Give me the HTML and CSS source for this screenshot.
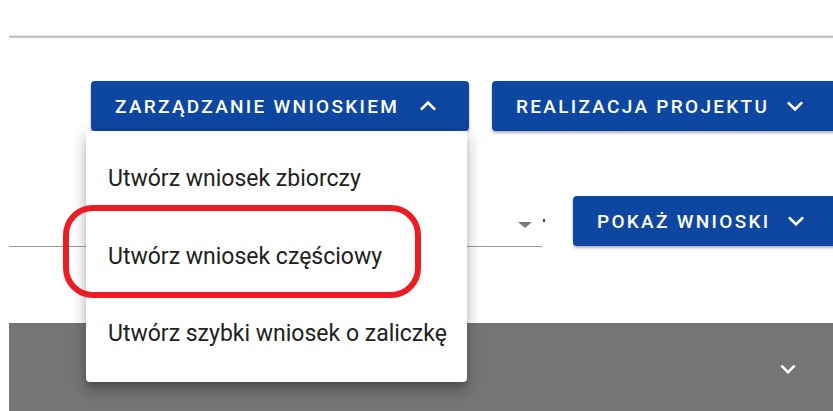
FILE: index.html
```html
<!DOCTYPE html>
<html lang="pl">
<head>
<meta charset="utf-8">
<title>Wnioski</title>
<link rel="stylesheet" href="styles.css">
</head>
<body>
<div class="page">
  <div class="rule"></div>

  <div class="actions">
    <div class="menu-wrap">
      <button class="btn btn-wide">
        <span>ZARZĄDZANIE WNIOSKIEM</span>
        <svg class="chev" viewBox="0 0 24 24"><path d="M12 8l-6 6 1.41 1.41L12 10.83l4.59 4.58L18 14z"/></svg>
      </button>
      <ul class="menu">
        <li>Utwórz wniosek zbiorczy</li>
        <li>Utwórz wniosek częściowy</li>
        <li>Utwórz szybki wniosek o zaliczkę</li>
      </ul>
      <div class="ring"></div>
    </div>
    <button class="btn btn-edge">
      <span>REALIZACJA PROJEKTU</span>
      <svg class="chev" viewBox="0 0 24 24"><path d="M16.59 8.59L12 13.17 7.41 8.59 6 10l6 6 6-6z"/></svg>
    </button>
  </div>

  <div class="filters">
    <div class="select">
      <span class="caret"></span>
      <span class="tick"></span>
    </div>
    <button class="btn btn-edge">
      <span>POKAŻ WNIOSKI</span>
      <svg class="chev" viewBox="0 0 24 24"><path d="M16.59 8.59L12 13.17 7.41 8.59 6 10l6 6 6-6z"/></svg>
    </button>
  </div>

  <div class="bar">
    <svg class="bar-chev" viewBox="0 0 24 24"><path d="M16.59 8.59L12 13.17 7.41 8.59 6 10l6 6 6-6z"/></svg>
  </div>
</div>
</body>
</html>
```

FILE: styles.css
```css
html, body {
  margin: 0;
  padding: 0;
  background: #fff;
  overflow: hidden;
}

body {
  width: 833px;
  height: 411px;
  font-family: Roboto, "Noto Sans", sans-serif;
}

.page {
  padding-left: 9px;
}

.rule {
  margin-top: 35px;
  height: 3px;
  background: #c2c2c2;
  border-top: 1px solid #e2e2e2;
  box-sizing: border-box;
}

/* top action buttons */
.actions {
  display: flex;
  gap: 23px;
  margin-top: 43px;
  margin-left: 82px;
  width: 900px;
}

.btn {
  display: flex;
  align-items: center;
  justify-content: space-between;
  height: 50px;
  padding: 0 24px;
  border: 0;
  border-radius: 4px;
  background: #0e47a1;
  color: #fff;
  font-family: Roboto, sans-serif;
  font-weight: 500;
  font-size: 19px;
  letter-spacing: 2.3px;
  box-shadow: 0 2px 3px rgba(0, 0, 0, 0.3);
  box-sizing: border-box;
  white-space: nowrap;
}

.btn-wide {
  width: 378px;
  padding-right: 33px;
}

.btn-edge {
  width: 380px;
  justify-content: flex-start;
  gap: 18px;
}

.chev {
  width: 32px;
  height: 32px;
  margin: 0 -8px;
  fill: #fff;
}

.menu-wrap {
  position: relative;
}

/* dropdown opened under the first button */
.menu {
  position: absolute;
  left: -5px;
  top: 50px;
  width: 381px;
  margin: 0;
  padding: 9px 0;
  list-style: none;
  background: #fff;
  border-radius: 0 0 4px 4px;
  box-shadow: 0 5px 6px -3px rgba(0, 0, 0, 0.2), 0 9px 12px 1px rgba(0, 0, 0, 0.14), 0 3px 16px 2px rgba(0, 0, 0, 0.12);
  box-sizing: border-box;
  z-index: 2;
}

.menu li {
  height: 77.5px;
  display: flex;
  align-items: center;
  padding-left: 22px;
  font-size: 23px;
  color: #212121;
}

/* hand-drawn highlight around the second option */
.ring {
  position: absolute;
  left: -28px;
  top: 124px;
  width: 358px;
  height: 93px;
  border: 6px solid #ec1c24;
  border-radius: 30px;
  box-sizing: border-box;
  z-index: 3;
}

/* filter row */
.filters {
  display: flex;
  gap: 31px;
  margin-top: 65px;
  width: 900px;
}

.select {
  position: relative;
  width: 533px;
  height: 51px;
  border-bottom: 1px solid #9a9a9a;
  box-sizing: border-box;
}

.caret {
  position: absolute;
  right: 10px;
  top: 26px;
  width: 0;
  height: 0;
  border-left: 7px solid transparent;
  border-right: 7px solid transparent;
  border-top: 6px solid #7a7a7a;
}

.tick {
  position: absolute;
  right: -3px;
  top: 23px;
  width: 2px;
  height: 3px;
  background: #3a3a5a;
}

.filters .btn {
  width: 300px;
}

/* collapsed grey panel */
.bar {
  display: flex;
  align-items: center;
  justify-content: flex-end;
  margin-top: 76px;
  height: 88px;
  padding-right: 30px;
  padding-top: 4px;
  box-sizing: border-box;
  background: #757575;
}

.bar-chev {
  width: 30px;
  height: 30px;
  fill: #fff;
}
```
